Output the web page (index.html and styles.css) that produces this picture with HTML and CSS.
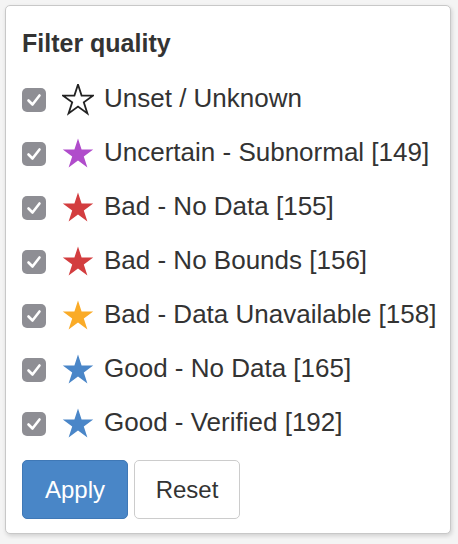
FILE: index.html
```html
<!DOCTYPE html>
<html>
<head>
<meta charset="utf-8">
<link rel="stylesheet" href="styles.css">
</head>
<body>
<svg width="0" height="0" class="defs">
  <defs>
    <path id="star" d="M16 0.5 L19.59 11.56 L31.22 11.56 L21.81 18.39 L25.4 29.44 L16 22.61 L6.6 29.44 L10.19 18.39 L0.78 11.56 L12.41 11.56 Z"/>
  </defs>
</svg>
<div class="card">
  <h3 class="title">Filter quality</h3>
  <ul class="list">
    <li class="row"><span class="cb"><svg viewBox="0 0 24 24"><path d="M6.5 12.5 L10.5 16.5 L17.5 7.5"/></svg></span><svg class="star outline" viewBox="0 0 32 32"><use href="#star"/></svg><span class="label">Unset / Unknown</span></li>
    <li class="row"><span class="cb"><svg viewBox="0 0 24 24"><path d="M6.5 12.5 L10.5 16.5 L17.5 7.5"/></svg></span><svg class="star purple" viewBox="0 0 32 32"><use href="#star"/></svg><span class="label">Uncertain - Subnormal [149]</span></li>
    <li class="row"><span class="cb"><svg viewBox="0 0 24 24"><path d="M6.5 12.5 L10.5 16.5 L17.5 7.5"/></svg></span><svg class="star red" viewBox="0 0 32 32"><use href="#star"/></svg><span class="label">Bad - No Data [155]</span></li>
    <li class="row"><span class="cb"><svg viewBox="0 0 24 24"><path d="M6.5 12.5 L10.5 16.5 L17.5 7.5"/></svg></span><svg class="star red" viewBox="0 0 32 32"><use href="#star"/></svg><span class="label">Bad - No Bounds [156]</span></li>
    <li class="row"><span class="cb"><svg viewBox="0 0 24 24"><path d="M6.5 12.5 L10.5 16.5 L17.5 7.5"/></svg></span><svg class="star orange" viewBox="0 0 32 32"><use href="#star"/></svg><span class="label">Bad - Data Unavailable [158]</span></li>
    <li class="row"><span class="cb"><svg viewBox="0 0 24 24"><path d="M6.5 12.5 L10.5 16.5 L17.5 7.5"/></svg></span><svg class="star blue" viewBox="0 0 32 32"><use href="#star"/></svg><span class="label">Good - No Data [165]</span></li>
    <li class="row"><span class="cb"><svg viewBox="0 0 24 24"><path d="M6.5 12.5 L10.5 16.5 L17.5 7.5"/></svg></span><svg class="star blue" viewBox="0 0 32 32"><use href="#star"/></svg><span class="label">Good - Verified [192]</span></li>
  </ul>
  <div class="actions">
    <button class="btn primary">Apply</button>
    <button class="btn">Reset</button>
  </div>
</div>
</body>
</html>
```

FILE: styles.css
```css
html, body {
  margin: 0;
  padding: 0;
  background: #f4f4f4;
}
body {
  padding: 5px;
  font-family: "Liberation Sans", Arial, sans-serif;
  color: #333;
}
.defs {
  position: absolute;
}
.card {
  width: 446px;
  height: 529px;
  box-sizing: border-box;
  background: #fff;
  border: 1px solid #c8c8c8;
  border-radius: 5px;
  box-shadow: 1px 2px 4px rgba(0,0,0,0.15);
  padding: 22px 16px 0 16px;
}
.title {
  margin: 0;
  font-size: 25px;
  line-height: 30px;
  font-weight: bold;
  color: #333;
}
.list {
  list-style: none;
  margin: 15px 0 0 0;
  padding: 0;
}
.row {
  height: 54px;
  display: flex;
  align-items: center;
}
.cb {
  width: 24px;
  height: 24px;
  border-radius: 5px;
  background: #8e8e94;
  display: flex;
  align-items: center;
  justify-content: center;
  flex-shrink: 0;
}
.cb svg {
  width: 24px;
  height: 24px;
}
.cb path {
  fill: none;
  stroke: #fff;
  stroke-width: 2.6;
  stroke-linecap: round;
  stroke-linejoin: round;
}
.star {
  width: 32px;
  height: 32px;
  margin-left: 16px;
  margin-right: 10px;
  flex-shrink: 0;
}
.star.outline use {
  fill: none;
  stroke: #222;
  stroke-width: 1.8;
  stroke-linejoin: miter;
}
.star.purple { fill: #b04ccb; }
.star.red { fill: #d33d3f; }
.star.orange { fill: #faab27; }
.star.blue { fill: #4a86c8; }
.label {
  font-size: 26px;
  line-height: 30px;
  color: #333;
  white-space: nowrap;
  position: relative;
  top: -2px;
}
.actions {
  display: flex;
  gap: 6px;
  margin-top: 9px;
}
.btn {
  height: 59px;
  width: 106px;
  box-sizing: border-box;
  border: 1px solid #ccc;
  border-radius: 5px;
  background: #fff;
  color: #333;
  font-family: "Liberation Sans", Arial, sans-serif;
  font-size: 24px;
  padding: 0;
}
.btn.primary {
  background: #4986c7;
  border-color: #3f78b6;
  color: #fff;
}
```
